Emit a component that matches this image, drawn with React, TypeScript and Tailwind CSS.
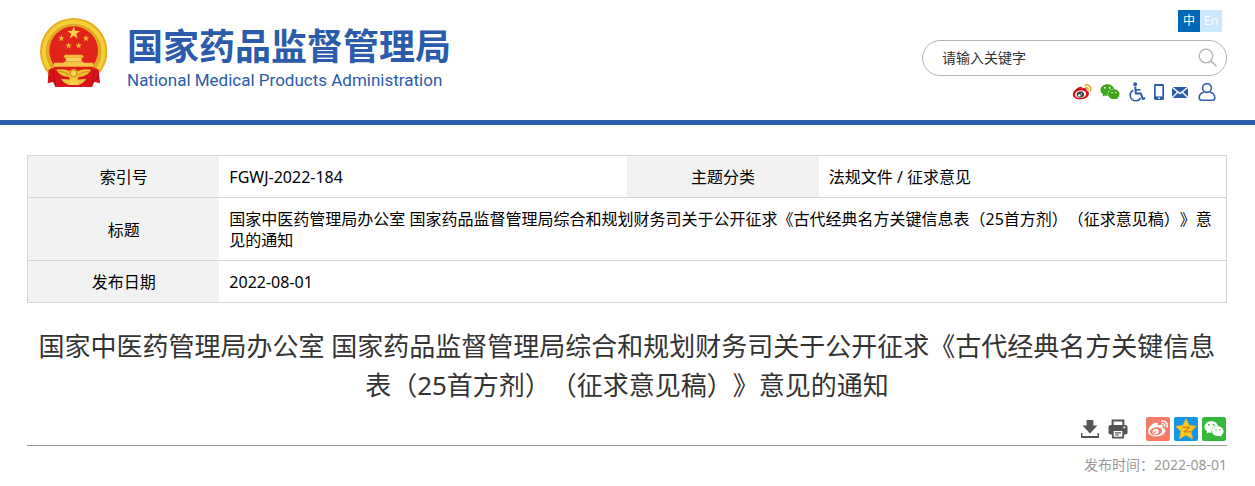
import React from "react";
import { FaWeibo, FaWeixin } from "react-icons/fa";

const TITLE =
  "国家中医药管理局办公室 国家药品监督管理局综合和规划财务司关于公开征求《古代经典名方关键信息表（25首方剂）（征求意见稿）》意见的通知";

const STAR = "0,-10 2.4,-3.2 9.5,-3.1 3.8,1.2 5.9,8.1 0,4 -5.9,8.1 -3.8,1.2 -9.5,-3.1 -2.4,-3.2";

const smallStars = [
  { x: 91, y: 85 },
  { x: 165, y: 85 },
  { x: 113, y: 107 },
  { x: 143, y: 107 },
];

const Emblem = () => (
  <svg viewBox="27 24 201 210" className="h-[70px] w-[67px]" aria-hidden="true">
    <circle cx="128" cy="125" r="101" fill="#e3a81c" />
    <circle cx="128" cy="125" r="89" fill="none" stroke="#f5cf3a" strokeWidth="12" />
    <circle cx="128" cy="125" r="82" fill="none" stroke="#e0a520" strokeWidth="3" strokeDasharray="6 4" />
    <circle cx="128" cy="125" r="97" fill="none" stroke="#edbd2c" strokeWidth="4" strokeDasharray="5 5" />
    <path d="M53 179C66 170 82 178 91 189Q128 216 165 189C174 178 190 170 203 179L207 220L190 216L182 231H74L66 216L50 220Z" fill="#d9141a" />
    <path d="M66 182L74 230M190 182L182 230M54 198L64 214M202 198L192 214" stroke="#a80d14" strokeWidth="3" />
    <circle cx="128" cy="122" r="73" fill="#e2231a" />
    <polygon points={STAR} transform="translate(128 69) scale(2)" fill="#f8d14a" />
    {smallStars.map((star) => (
      <polygon
        key={`${star.x}-${star.y}`}
        points={STAR}
        transform={`translate(${star.x} ${star.y}) scale(1.05)`}
        fill="#f5b72e"
      />
    ))}
    <path d="M102 134H154L159 143H97Z" fill="#f3bd38" />
    <path d="M104 143H152V155H104Z" fill="#f8d25a" />
    <path d="M98 155H158V158H187V170H69V158H98Z" fill="#f2c544" />
    <path d="M66 171H190L184 178H72Z" fill="#d91e18" />
    <path d="M76 180Q98 174 116 184A14 14 0 0 1 140 184Q158 174 180 180Q168 201 142 201A14 14 0 0 1 114 201Q88 201 76 180Z" fill="#efc02f" />
    <path d="M82 184Q100 183 115 196M174 184Q156 183 141 196" fill="none" stroke="#cf8c18" strokeWidth="3" />
    <circle cx="128" cy="190" r="10" fill="#f8d54e" stroke="#c98514" strokeWidth="3" />
    <path d="M90 206L122 209L116 225Q100 222 90 206ZM166 206L134 209L140 225Q156 222 166 206Z" fill="#f0c138" />
    <path d="M119 208H137L143 225H113Z" fill="#f7cf48" />
  </svg>
);

const SearchIcon = () => (
  <svg viewBox="0 0 20 20" className="size-5" fill="none" stroke="#b3b3b3">
    <circle cx="8" cy="8" r="6.8" strokeWidth="1.3" />
    <path d="M13 13L18.5 18.5" strokeWidth="1.6" />
  </svg>
);

const WeiboColorIcon = () => (
  <svg viewBox="0 0 20 18" className="h-[18px] w-5">
    <path d="M7.6 4C9.4 3.3 10.6 4 10.2 5.6C12.8 4.6 15.1 5.1 14.5 7.6C16.6 8.3 17.4 9.8 16.7 11.8C15.7 14.6 12 16.5 8 16.5C4 16.5.8 14.6.8 11.6C.8 8.8 4.2 5.3 7.6 4Z" fill="#e00b12" />
    <ellipse cx="8.6" cy="11.2" rx="5.6" ry="3.8" fill="#fff" transform="rotate(-8 8.6 11.2)" />
    <ellipse cx="8.4" cy="11.5" rx="3.7" ry="3.1" fill="#444" transform="rotate(-15 8.4 11.5)" />
    <circle cx="7.4" cy="12.4" r="1.2" fill="#fff" />
    <circle cx="9.4" cy="10.8" r=".6" fill="#fff" />
    <path d="M12.8 2.1C16.7 1 20 4.3 18.5 8" fill="none" stroke="#eda40c" strokeWidth="1.5" strokeLinecap="round" />
    <path d="M13.4 4.7C15.2 4.3 16.6 5.6 16.1 7.3" fill="none" stroke="#eda40c" strokeWidth="1.3" strokeLinecap="round" />
  </svg>
);

const WheelchairIcon = () => (
  <svg viewBox="0 0 18 20" className="h-5 w-[18px]" fill="none" stroke="#2b5bab">
    <circle cx="7.2" cy="2.2" r="1.9" fill="#2b5bab" stroke="none" />
    <path d="M7.2 4.5L7.8 11.4H12.9L14.8 17L17.2 16" strokeWidth="2" strokeLinejoin="round" />
    <path d="M7.4 7.8H12.4" strokeWidth="1.6" />
    <path d="M5.2 8.2A5.6 5.6 0 1 0 12.6 16" strokeWidth="1.6" />
  </svg>
);

const PhoneIcon = () => (
  <svg viewBox="0 0 10 18" className="h-[18px] w-[10px]">
    <rect y="1" width="10" height="16" rx="1.4" fill="#2b5bab" />
    <rect x="1.7" y="3" width="6.6" height="10.4" fill="#fff" />
    <circle cx="5" cy="15.2" r=".9" fill="#fff" />
  </svg>
);

const MailIcon = () => (
  <svg viewBox="0 0 18 18" className="size-[18px]">
    <rect y="4" width="16" height="11" fill="#2b5bab" />
    <path d="M0 4.2L8 10.6L16 4.2M0 14.8L5.8 9M16 14.8L10.2 9" fill="none" stroke="#fff" strokeWidth="1.3" />
  </svg>
);

const UserIcon = () => (
  <svg viewBox="0 0 18 18" className="size-[18px]" fill="none" stroke="#3f60ae" strokeWidth="1.6">
    <circle cx="9" cy="5" r="4.4" />
    <path d="M5.8 9.2C2.4 10 1.2 12 1.2 14.6Q1.2 17.2 3.2 17.2H14.8Q16.8 17.2 16.8 14.6C16.8 12 15.6 10 12.2 9.2" strokeLinejoin="round" />
  </svg>
);

const DownloadIcon = () => (
  <svg viewBox="0 0 18 18" className="size-[18px]" fill="#555">
    <path d="M5.6 0H12.4V5.6H16.4L9 13.4L1.6 5.6H5.6Z" />
    <path d="M0 13H1.4V16H16.6V13H18V18H0Z" />
  </svg>
);

const PrintIcon = () => (
  <svg viewBox="0 0 20 20" className="size-5">
    <path d="M4.6 6V1.6H15.4V6" fill="none" stroke="#555" strokeWidth="2" />
    <rect x=".5" y="6" width="19" height="9.6" rx="2" fill="#555" />
    <rect x="15.4" y="7.6" width="1.8" height="1.6" fill="#fff" />
    <path d="M4.8 11.2H15.2V18.6H4.8Z" fill="#fff" stroke="#555" strokeWidth="1.8" />
    <path d="M7 13.8H13M7 16H11" stroke="#555" strokeWidth="1.2" />
  </svg>
);

const QzoneIcon = () => (
  <svg viewBox="0 0 24 24" className="size-6">
    <path d="M12 1.5L15.2 8.2L22.5 9.2L17.1 14.5L18.7 22L12 18.3L5.3 22L6.9 14.5L1.5 9.2L8.8 8.2Z" fill="#fdc81e" stroke="#f0a51a" strokeWidth=".6" strokeLinejoin="round" />
    <path d="M8.6 10.4Q12 9.8 15.2 10.4L10.4 14.6Q13.5 15.4 16.6 14.4" fill="none" stroke="#d07c14" strokeWidth="1.2" />
  </svg>
);

const headerLinks = [
  { label: "微博", icon: <WeiboColorIcon /> },
  { label: "微信", icon: <FaWeixin className="size-5 text-[#3fa51a]" /> },
  { label: "无障碍", icon: <WheelchairIcon /> },
  { label: "手机版", icon: <PhoneIcon /> },
  { label: "邮箱", icon: <MailIcon /> },
  { label: "个人中心", icon: <UserIcon /> },
];

const Header = () => (
  <header className="border-b-5 border-[#2b5bab] pr-7 pl-[27px]">
    <div className="mx-auto flex h-[120px] max-w-[1200px] justify-between">
      <a href="#" className="flex items-start pt-[18px] pl-[13px] text-[#2b5bab]">
        <Emblem />
        <span className="ml-5 flex flex-col pt-2">
          <span className="text-4xl leading-[42px] font-bold whitespace-nowrap">国家药品监督管理局</span>
          <span className="font-['Roboto'] text-[17px] leading-6 whitespace-nowrap">
            National Medical Products Administration
          </span>
        </span>
      </a>
      <div className="flex flex-col items-end pt-[10px]">
        <div className="mr-[5px] flex text-xs leading-[22px] text-white">
          <button className="size-[22px] bg-[#0068b7]">中</button>
          <button className="size-[22px] bg-[#cce8ff]">En</button>
        </div>
        <form className="mt-2 flex h-9 w-[305px] items-center rounded-full border border-[#b3b3b3] pr-2 pl-[19px]">
          <input
            type="text"
            aria-label="请输入关键字"
            placeholder="请输入关键字"
            className="min-w-0 flex-1 text-sm outline-none placeholder:text-[#333]"
          />
          <button type="button" aria-label="搜索">
            <SearchIcon />
          </button>
        </form>
        <nav className="mt-[7px] mr-[11px] flex h-[18px] items-center gap-2">
          {headerLinks.map((item) => (
            <a key={item.label} href="#" aria-label={item.label}>
              {item.icon}
            </a>
          ))}
        </nav>
      </div>
    </div>
  </header>
);

const th = "w-[16%] bg-[#f2f2f2] px-[10px] pt-[11px] pb-[9px] text-center font-normal";
const td = "px-[10px] pt-[11px] pb-[9px]";

const InfoTable = () => (
  <table className="w-full table-fixed border-collapse border border-[#d5d5d5] text-base leading-[21px] text-black">
    <tbody>
      <tr className="border-b border-[#d5d5d5]">
        <th className={th}>索引号</th>
        <td className={td}>FGWJ-2022-184</td>
        <th className={th}>主题分类</th>
        <td className={td}>法规文件 / 征求意见</td>
      </tr>
      <tr className="border-b border-[#d5d5d5]">
        <th className={th}>标题</th>
        <td className={td} colSpan={3}>
          {TITLE}
        </td>
      </tr>
      <tr>
        <th className={th}>发布日期</th>
        <td className={td} colSpan={3}>
          2022-08-01
        </td>
      </tr>
    </tbody>
  </table>
);

const tool = "flex size-6 items-center justify-center";

const App = () => {
  return (
    <div className="bg-white font-['Noto_Sans','Noto_Sans_CJK_SC',sans-serif] [text-spacing-trim:space-all]">
      <Header />
      <main className="pt-[30px] pr-7 pl-[27px]">
        <div className="mx-auto max-w-[1200px]">
          <InfoTable />
          <h1 className="mt-6 text-center text-[26px] leading-[39px] text-[#333]">{TITLE}</h1>
          <div className="mt-3 flex justify-end gap-1 border-b border-[#999] pr-px pb-1">
            <button className={tool} aria-label="下载">
              <DownloadIcon />
            </button>
            <button className={tool} aria-label="打印">
              <PrintIcon />
            </button>
            <a href="#" className={`${tool} ml-3 rounded-xs bg-[#f67a68] text-white`} aria-label="分享到微博">
              <FaWeibo className="size-5" />
            </a>
            <a href="#" className={`${tool} rounded-xs bg-[#1296e8]`} aria-label="分享到QQ空间">
              <QzoneIcon />
            </a>
            <a href="#" className={`${tool} rounded-xs bg-[#35b83c] text-white`} aria-label="分享到微信">
              <FaWeixin className="size-5" />
            </a>
          </div>
          <p className="pt-[7px] text-right text-sm leading-6 text-[#999]">发布时间：2022-08-01</p>
        </div>
      </main>
    </div>
  );
};

export default App;
